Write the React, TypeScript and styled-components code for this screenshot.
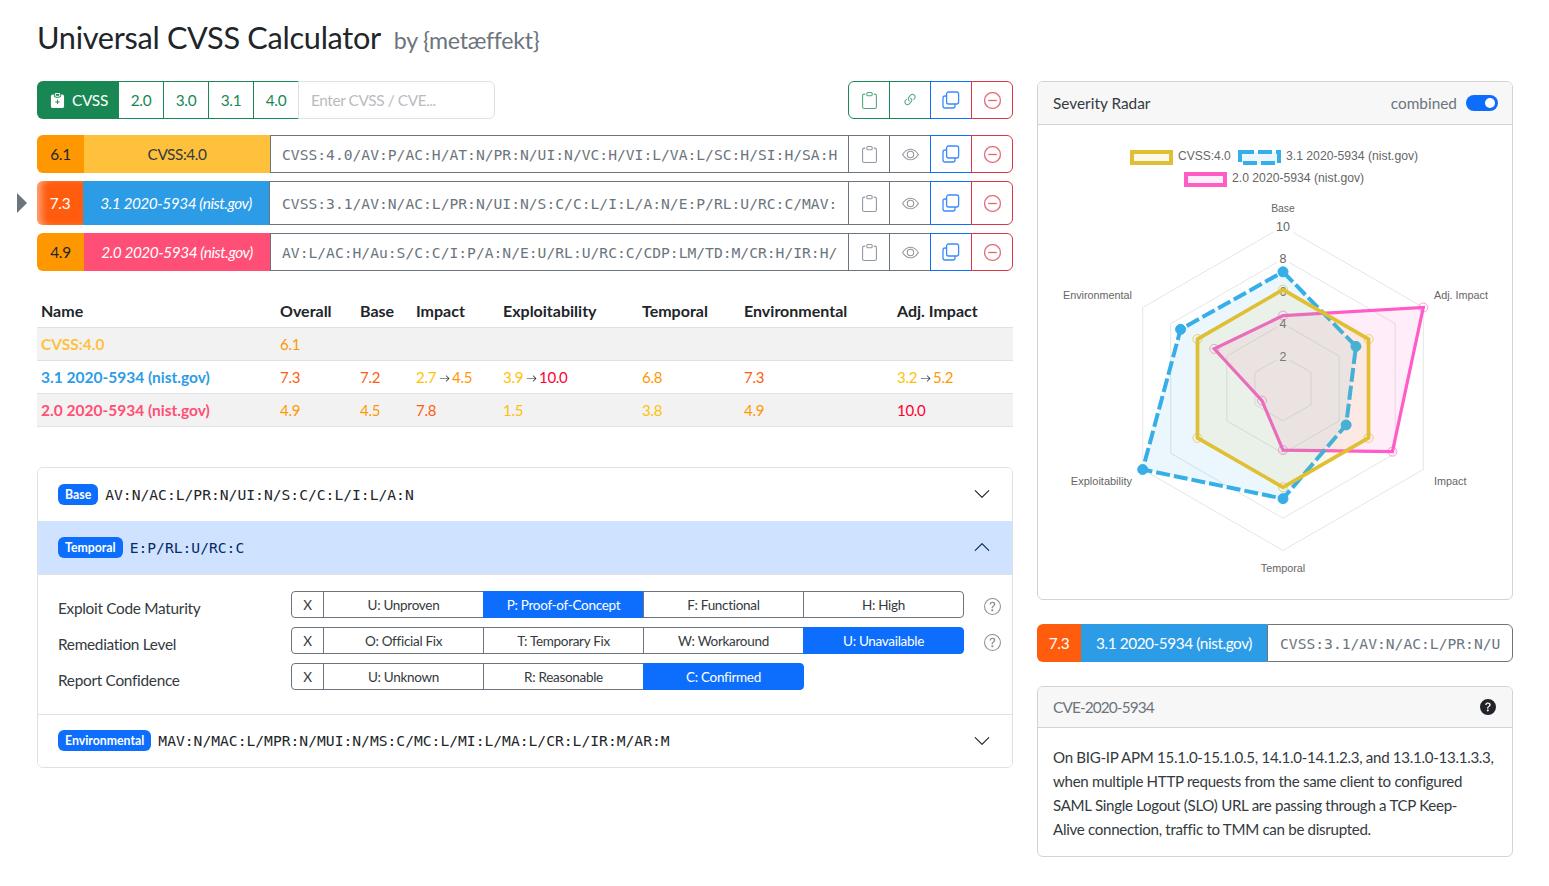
import React from "react";
import styled, { createGlobalStyle } from "styled-components";
import {
  BsArrowRight,
  BsChevronDown,
  BsChevronUp,
  BsClipboard,
  BsClipboardPlusFill,
  BsDashCircle,
  BsEye,
  BsLink45Deg,
  BsQuestionCircle,
  BsQuestionCircleFill,
} from "react-icons/bs";

const SANS = `Lato, "Noto Sans", sans-serif`;
const MONO = `"DejaVu Sans Mono", "Liberation Mono", monospace`;

const GlobalStyle = createGlobalStyle`
  html, body {
    margin: 0;
    background: #fff;
    color: #212529;
    font-family: ${SANS};
    font-size: 15.4px;
    letter-spacing: -0.3px;
  }
  * { box-sizing: border-box; }
`;

const Page = styled.div`
  width: 1549px;
  padding: 19px 36px 0 37px;
`;

const Title = styled.h1`
  height: 38px;
  margin: 0 0 24px;
  font-size: 30.7px;
  line-height: 38px;
  font-weight: 400;
  small {
    margin-left: 6px;
    font-size: 23.2px;
    color: #6c757d;
  }
`;

const Columns = styled.div`
  display: grid;
  grid-template-columns: 976px 476px;
  gap: 24px;
  align-items: start;
`;

const Left = styled.div`
  display: flex;
  flex-direction: column;
`;

const Right = styled.div`
  display: flex;
  flex-direction: column;
  gap: 24px;
`;

const Toolbar = styled.div`
  display: flex;
  height: 38px;
  margin-bottom: 16px;
  justify-content: space-between;
`;

const ToolGroup = styled.div`
  display: flex;
`;

const CvssButton = styled.div`
  display: flex;
  align-items: center;
  gap: 7px;
  width: 82px;
  padding-left: 13px;
  background: #198754;
  color: #fff;
  border-radius: 6px 0 0 6px;
`;

const VersionButton = styled.div`
  display: flex;
  align-items: center;
  justify-content: center;
  width: 46px;
  margin-left: -1px;
  border: 1px solid #198754;
  color: #198754;
`;

const CveInput = styled.input`
  width: 197px;
  height: 38px;
  margin-left: -1px;
  padding: 0 12px;
  border: 1px solid #dee2e6;
  border-radius: 0 6px 6px 0;
  outline: none;
  font: 15.4px ${SANS};
  letter-spacing: -0.4px;
  &::placeholder { color: #b9bcbf; opacity: 1; }
`;

const VectorRow = styled.div<{ $selected?: boolean }>`
  position: relative;
  display: flex;
  height: ${(p) => (p.$selected ? 44 : 38)}px;
  margin-bottom: 8px;
`;

const Pointer = styled.div`
  position: absolute;
  left: -20px;
  top: 12px;
  border-left: 10px solid #6c757d;
  border-top: 10px solid transparent;
  border-bottom: 10px solid transparent;
`;

const ScoreCell = styled.div<{ $bg: string; $light?: boolean; $width: number; $glow?: boolean }>`
  display: flex;
  align-items: center;
  justify-content: center;
  flex: 0 0 ${(p) => p.$width}px;
  background: ${(p) => p.$bg};
  color: ${(p) => (p.$light ? "#fff" : "#212529")};
  border-radius: 6px 0 0 6px;
  box-shadow: ${(p) => (p.$glow ? "inset 7px 0 6px -2px rgba(255,255,255,.4)" : "none")};
`;

const NameCell = styled.div<{ $bg: string; $light?: boolean; $italic?: boolean; $width?: number }>`
  display: flex;
  align-items: center;
  justify-content: center;
  flex: 0 0 ${(p) => p.$width ?? 186}px;
  background: ${(p) => p.$bg};
  color: ${(p) => (p.$light ? "#fff" : "#343a40")};
  font-style: ${(p) => (p.$italic ? "italic" : "normal")};
  letter-spacing: -0.45px;
  white-space: nowrap;
`;

const VectorText = styled.div<{ $round?: boolean; $pad?: number }>`
  flex: 1;
  min-width: 0;
  display: flex;
  align-items: center;
  padding: 0 ${(p) => p.$pad ?? 11}px;
  border: 1px solid #6c757d;
  border-radius: ${(p) => (p.$round ? "0 6px 6px 0" : "0")};
  font-family: ${MONO};
  font-size: 14.65px;
  letter-spacing: 0;
  color: #6c757d;
  white-space: nowrap;
  overflow: hidden;
`;

const IconButton = styled.div<{ $color: string; $end?: boolean; $start?: boolean }>`
  position: relative;
  display: flex;
  align-items: center;
  justify-content: center;
  flex: 0 0 42px;
  margin-left: ${(p) => (p.$start ? 0 : -1)}px;
  border: 1px solid ${(p) => p.$color};
  border-radius: ${(p) => (p.$end ? "0 6px 6px 0" : p.$start ? "6px 0 0 6px" : "0")};
  color: ${(p) => p.$color};
  svg { opacity: ${(p) => (p.$color === "#0d6efd" ? 0.8 : 0.75)}; }
`;

const Table = styled.table`
  width: 976px;
  margin-top: 16px;
  border-collapse: collapse;
  table-layout: fixed;
  th {
    height: 32px;
    padding: 4px;
    text-align: left;
    font-weight: 700;
    font-size: 16px;
    letter-spacing: 0;
    border-bottom: 1px solid #dee2e6;
  }
  td {
    height: 33px;
    padding: 4px;
    border-bottom: 1px solid #dee2e6;
    font-size: 15px;
  }
  tbody tr:nth-child(odd) { background: #f2f2f2; }
`;

const RowName = styled.span<{ $color: string }>`
  color: ${(p) => p.$color};
  font-weight: 700;
  font-size: 15.5px;
  letter-spacing: 0;
`;

const Score = styled.span<{ $color: string }>`
  color: ${(p) => p.$color};
`;

const Arrow = styled(BsArrowRight)`
  margin: 0 2px 0 3px;
  color: #212529;
  vertical-align: -1px;
`;

const Accordion = styled.div`
  margin-top: 40px;
  border: 1px solid #dee2e6;
  border-radius: 6px;
  overflow: hidden;
`;

const AccordionHeader = styled.div<{ $active?: boolean; $height: number; $top?: boolean }>`
  display: flex;
  align-items: center;
  gap: 7px;
  height: ${(p) => p.$height}px;
  padding: 0 21px 0 20px;
  background: ${(p) => (p.$active ? "#cfe2ff" : "#fff")};
  color: ${(p) => (p.$active ? "#052c65" : "#212529")};
  border-top: ${(p) => (p.$top ? "1px solid #dee2e6" : "none")};
  svg { margin-left: auto; }
`;

const Badge = styled.span`
  padding: 0 7px;
  height: 21px;
  line-height: 21px;
  border-radius: 6px;
  background: #0d6efd;
  color: #fff;
  font-size: 12.3px;
  font-weight: 700;
  letter-spacing: 0;
`;

const HeaderVector = styled.span`
  font-family: ${MONO};
  font-size: 14.65px;
  letter-spacing: 0;
`;

const AccordionBody = styled.div`
  display: grid;
  grid-template-columns: 233px 673px 1fr;
  row-gap: 9px;
  padding: 16px 0 24px 20px;
  border-top: 1px solid #dee2e6;
`;

const MetricLabel = styled.div`
  padding-top: 5px;
  line-height: 24px;
  height: 27px;
  color: #343a40;
`;

const Segments = styled.div`
  display: flex;
  height: 27px;
`;

const Segment = styled.div<{ $active?: boolean }>`
  display: flex;
  align-items: center;
  justify-content: center;
  flex: 0 0 161px;
  margin-left: -1px;
  padding-top: 1px;
  border: 1px solid ${(p) => (p.$active ? "#0d6efd" : "#6c757d")};
  background: ${(p) => (p.$active ? "#0d6efd" : "#fff")};
  color: ${(p) => (p.$active ? "#fff" : "#343a40")};
  font-size: 13.5px;
  &:first-child { margin-left: 0; border-radius: 4px 0 0 4px; flex-basis: 33px; }
  &:last-child { border-radius: 0 4px 4px 0; }
`;

const HelpCell = styled.div`
  display: flex;
  align-items: center;
  padding: 4px 0 0 20px;
  color: #8b9298;
`;

const Card = styled.div`
  border: 1px solid #d3d3d3;
  border-radius: 6px;
  overflow: hidden;
`;

const CardHeader = styled.div<{ $height: number; $right: number }>`
  display: flex;
  align-items: center;
  justify-content: space-between;
  height: ${(p) => p.$height}px;
  padding: 0 ${(p) => p.$right}px 0 15px;
  background: #f7f7f7;
  border-bottom: 1px solid #d3d3d3;
`;

const CardTitle = styled.span<{ $muted?: boolean }>`
  color: ${(p) => (p.$muted ? "#6c757d" : "#343a40")};
  letter-spacing: ${(p) => (p.$muted ? "-0.9px" : "0")};
`;

const SwitchWrap = styled.div`
  display: flex;
  align-items: center;
  gap: 9px;
  color: #6c757d;
  letter-spacing: 0;
`;

const SwitchTrack = styled.span`
  display: flex;
  align-items: center;
  justify-content: flex-end;
  width: 32px;
  height: 16px;
  padding: 0 3px;
  border-radius: 8px;
  background: #0d6efd;
  &::after {
    content: "";
    width: 10px;
    height: 10px;
    border-radius: 50%;
    background: #fff;
  }
`;

const RadarSvg = styled.svg`
  display: block;
  width: 474px;
  height: 474px;
  font-family: "Liberation Sans", Arial, sans-serif;
  letter-spacing: 0;
  fill: #666;
`;

const SummaryRow = styled.div`
  display: flex;
  height: 38px;
`;

const CardText = styled.p`
  margin: 0;
  padding: 17px 15px 15px;
  font-size: 15.1px;
  line-height: 24px;
  color: #343a40;
`;

// two overlapping rounded squares, the package icons draw this one differently
const CopyIcon = () => (
  <svg width="18" height="18" viewBox="0 0 18 18" fill="none" stroke="currentColor" strokeWidth="1.3">
    <rect x="4.6" y="1" width="12" height="12" rx="2" />
    <path d="M4.6 5H3a2 2 0 0 0-2 2v8a2 2 0 0 0 2 2h8a2 2 0 0 0 2-2v-2" />
  </svg>
);

const ActionCells = ({ first }: { first?: boolean }) => (
  <>
    <IconButton $color={first ? "#198754" : "#6c757d"} $start={first}>
      <BsClipboard size={17} />
    </IconButton>
    <IconButton $color={first ? "#198754" : "#6c757d"}>
      {first ? <BsLink45Deg size={16} /> : <BsEye size={17} />}
    </IconButton>
    <IconButton $color="#0d6efd">
      <CopyIcon />
    </IconButton>
    <IconButton $color="#dc3545" $end>
      <BsDashCircle size={17} strokeWidth={0.3} />
    </IconButton>
  </>
);

const YELLOW = "#ffc13b";
const BLUE = "#2d9ce6";
const PINK = "#ff4f76";
const ORANGE = "#ff9800";
const RED_ORANGE = "#ff5c0d";
const AMBER = "#ffc107";
const RED = "#ff0033";

const CX = 1283;
const CY = 388.5;
const UNIT = 16.2;

const polar = (index: number, value: number) => {
  const angle = (index * Math.PI) / 3;
  return [CX + Math.sin(angle) * value * UNIT, CY - Math.cos(angle) * value * UNIT];
};

const points = (values: number[]) => values.map((v, i) => polar(i, v).join(",")).join(" ");

const datasets = [
  { values: [4.5, 10, 7.8, 3.8, 1.5, 4.9], color: "#ff5cc8", width: 3.2, fill: "rgba(255,92,200,.1)", mark: "rgba(255,92,200,.6)" },
  { values: [7.2, 5.2, 4.5, 6.8, 10, 7.3], color: "#36aee8", width: 4, fill: "rgba(54,174,232,.1)", dash: "14 4", solid: true, mark: "#36aee8" },
  { values: [6.1, 6.1, 6.1, 6.1, 6.1, 6.1], color: "#e0c032", width: 3.6, fill: "rgba(224,192,50,.1)", mark: "rgba(224,192,50,.7)" },
];

const Radar = () => (
  <RadarSvg viewBox="1038 125 474 474">
    <rect x="1132" y="152" width="39" height="11" fill="#fdf9ea" stroke="#e0c032" strokeWidth="4" />
    <text x="1178" y="160" fontSize="12">CVSS:4.0</text>
    <rect x="1240" y="152" width="39" height="11" fill="#ebf7fd" stroke="#36aee8" strokeWidth="4" strokeDasharray="14 4" />
    <text x="1286" y="160" fontSize="12.2">3.1 2020-5934 (nist.gov)</text>
    <rect x="1186" y="174" width="39" height="11" fill="#ffeffa" stroke="#ff5cc8" strokeWidth="4" />
    <text x="1232" y="182" fontSize="12.2">2.0 2020-5934 (nist.gov)</text>

    {[2, 4, 6, 8, 10].map((v) => (
      <polygon key={v} points={points(Array(6).fill(v))} fill="none" stroke="#e5e5e5" />
    ))}
    {[2, 4, 6, 8, 10].map((v) => (
      <g key={v}>
        <rect x={v === 10 ? 1273 : 1277} y={CY - v * UNIT - 7} width={v === 10 ? 20 : 12} height="14" fill="#fff" />
        <text x={CX} y={CY - v * UNIT + 4.5} fontSize="12.5" textAnchor="middle">{v}</text>
      </g>
    ))}
    {datasets.map((d) => (
      <g key={d.color}>
        <polygon points={points(d.values)} fill={d.fill} stroke={d.color} strokeWidth={d.width} strokeDasharray={d.dash} />
        {d.values.map((v, i) => {
          const [x, y] = polar(i, v);
          return (
            <circle key={i} cx={x} cy={y} r={d.solid ? 5 : 4.5} fill={d.solid ? d.mark : "none"} stroke={d.mark} />
          );
        })}
      </g>
    ))}
    <text x={CX} y="212" fontSize="10.4" textAnchor="middle">Base</text>
    <text x="1434" y="299" fontSize="10.8">Adj. Impact</text>
    <text x="1434" y="485" fontSize="10.8">Impact</text>
    <text x={CX} y="572" fontSize="10.8" textAnchor="middle">Temporal</text>
    <text x="1132" y="485" fontSize="11" textAnchor="end">Exploitability</text>
    <text x="1132" y="299" fontSize="10.8" textAnchor="end">Environmental</text>
  </RadarSvg>
);

const Change = ({ from, to }: { from: [string, string]; to: [string, string] }) => (
  <>
    <Score $color={from[1]}>{from[0]}</Score>
    <Arrow size={11} />
    <Score $color={to[1]}>{to[0]}</Score>
  </>
);

const metrics = [
  { label: "Exploit Code Maturity", options: ["U: Unproven", "P: Proof-of-Concept", "F: Functional", "H: High"], active: 1, help: true },
  { label: "Remediation Level", options: ["O: Official Fix", "T: Temporary Fix", "W: Workaround", "U: Unavailable"], active: 3, help: true },
  { label: "Report Confidence", options: ["U: Unknown", "R: Reasonable", "C: Confirmed"], active: 2, help: false },
];

export default function App() {
  return (
    <Page>
      <GlobalStyle />
      <Title>
        Universal CVSS Calculator <small>by {"{metæffekt}"}</small>
      </Title>
      <Columns>
        <Left>
          <Toolbar>
            <ToolGroup>
              <CvssButton>
                <BsClipboardPlusFill size={15} /> CVSS
              </CvssButton>
              <VersionButton>2.0</VersionButton>
              <VersionButton>3.0</VersionButton>
              <VersionButton>3.1</VersionButton>
              <VersionButton>4.0</VersionButton>
              <CveInput placeholder="Enter CVSS / CVE..." />
            </ToolGroup>
            <ToolGroup>
              <ActionCells first />
            </ToolGroup>
          </Toolbar>

          <VectorRow>
            <ScoreCell $bg={ORANGE} $width={47}>6.1</ScoreCell>
            <NameCell $bg={YELLOW}>CVSS:4.0</NameCell>
            <VectorText>CVSS:4.0/AV:P/AC:H/AT:N/PR:N/UI:N/VC:H/VI:L/VA:L/SC:H/SI:H/SA:H</VectorText>
            <ActionCells />
          </VectorRow>
          <VectorRow $selected>
            <Pointer />
            <ScoreCell $bg={RED_ORANGE} $width={46} $light $glow>7.3</ScoreCell>
            <NameCell $bg={BLUE} $light $italic>3.1 2020-5934 (nist.gov)</NameCell>
            <VectorText $pad={12}>CVSS:3.1/AV:N/AC:L/PR:N/UI:N/S:C/C:L/I:L/A:N/E:P/RL:U/RC:C/MAV:</VectorText>
            <ActionCells />
          </VectorRow>
          <VectorRow>
            <ScoreCell $bg={ORANGE} $width={47}>4.9</ScoreCell>
            <NameCell $bg={PINK} $light $italic>2.0 2020-5934 (nist.gov)</NameCell>
            <VectorText>AV:L/AC:H/Au:S/C:C/I:P/A:N/E:U/RL:U/RC:C/CDP:LM/TD:M/CR:H/IR:H/</VectorText>
            <ActionCells />
          </VectorRow>

          <Table>
            <colgroup>
              <col width="239" />
              <col width="80" />
              <col width="56" />
              <col width="87" />
              <col width="139" />
              <col width="102" />
              <col width="153" />
              <col width="120" />
            </colgroup>
            <thead>
              <tr>
                <th>Name</th>
                <th>Overall</th>
                <th>Base</th>
                <th>Impact</th>
                <th>Exploitability</th>
                <th>Temporal</th>
                <th>Environmental</th>
                <th>Adj. Impact</th>
              </tr>
            </thead>
            <tbody>
              <tr>
                <td><RowName $color={YELLOW}>CVSS:4.0</RowName></td>
                <td><Score $color={ORANGE}>6.1</Score></td>
                <td /><td /><td /><td /><td /><td />
              </tr>
              <tr>
                <td><RowName $color={BLUE}>3.1 2020-5934 (nist.gov)</RowName></td>
                <td><Score $color={RED_ORANGE}>7.3</Score></td>
                <td><Score $color={RED_ORANGE}>7.2</Score></td>
                <td><Change from={["2.7", AMBER]} to={["4.5", ORANGE]} /></td>
                <td><Change from={["3.9", AMBER]} to={["10.0", RED]} /></td>
                <td><Score $color={ORANGE}>6.8</Score></td>
                <td><Score $color={RED_ORANGE}>7.3</Score></td>
                <td><Change from={["3.2", AMBER]} to={["5.2", ORANGE]} /></td>
              </tr>
              <tr>
                <td><RowName $color={PINK}>2.0 2020-5934 (nist.gov)</RowName></td>
                <td><Score $color={ORANGE}>4.9</Score></td>
                <td><Score $color={ORANGE}>4.5</Score></td>
                <td><Score $color={RED_ORANGE}>7.8</Score></td>
                <td><Score $color={AMBER}>1.5</Score></td>
                <td><Score $color={AMBER}>3.8</Score></td>
                <td><Score $color={ORANGE}>4.9</Score></td>
                <td><Score $color={RED}>10.0</Score></td>
              </tr>
            </tbody>
          </Table>

          <Accordion>
            <AccordionHeader $height={53}>
              <Badge>Base</Badge>
              <HeaderVector>AV:N/AC:L/PR:N/UI:N/S:C/C:L/I:L/A:N</HeaderVector>
              <BsChevronDown size={18} />
            </AccordionHeader>
            <AccordionHeader $active $height={53}>
              <Badge>Temporal</Badge>
              <HeaderVector>E:P/RL:U/RC:C</HeaderVector>
              <BsChevronUp size={18} />
            </AccordionHeader>
            <AccordionBody>
              {metrics.map((m) => (
                <React.Fragment key={m.label}>
                  <MetricLabel>{m.label}</MetricLabel>
                  <Segments>
                    <Segment>X</Segment>
                    {m.options.map((o, i) => (
                      <Segment key={o} $active={i === m.active}>{o}</Segment>
                    ))}
                  </Segments>
                  <HelpCell>{m.help && <BsQuestionCircle size={17} />}</HelpCell>
                </React.Fragment>
              ))}
            </AccordionBody>
            <AccordionHeader $height={53} $top>
              <Badge>Environmental</Badge>
              <HeaderVector>MAV:N/MAC:L/MPR:N/MUI:N/MS:C/MC:L/MI:L/MA:L/CR:L/IR:M/AR:M</HeaderVector>
              <BsChevronDown size={18} />
            </AccordionHeader>
          </Accordion>
        </Left>

        <Right>
          <Card>
            <CardHeader $height={43} $right={14}>
              <CardTitle>Severity Radar</CardTitle>
              <SwitchWrap>
                combined
                <SwitchTrack />
              </SwitchWrap>
            </CardHeader>
            <Radar />
          </Card>

          <SummaryRow>
            <ScoreCell $bg={RED_ORANGE} $width={44} $light>7.3</ScoreCell>
            <NameCell $bg={BLUE} $light $width={186}>3.1 2020-5934 (nist.gov)</NameCell>
            <VectorText $round $pad={12}>CVSS:3.1/AV:N/AC:L/PR:N/U</VectorText>
          </SummaryRow>

          <Card>
            <CardHeader $height={41} $right={16}>
              <CardTitle $muted>CVE-2020-5934</CardTitle>
              <BsQuestionCircleFill size={16} color="#212529" />
            </CardHeader>
            <CardText>
              On BIG-IP APM 15.1.0-15.1.0.5, 14.1.0-14.1.2.3, and 13.1.0-13.1.3.3,
              <br />
              when multiple HTTP requests from the same client to configured
              <br />
              SAML Single Logout (SLO) URL are passing through a TCP Keep-
              <br />
              Alive connection, traffic to TMM can be disrupted.
            </CardText>
          </Card>
        </Right>
      </Columns>
    </Page>
  );
}
